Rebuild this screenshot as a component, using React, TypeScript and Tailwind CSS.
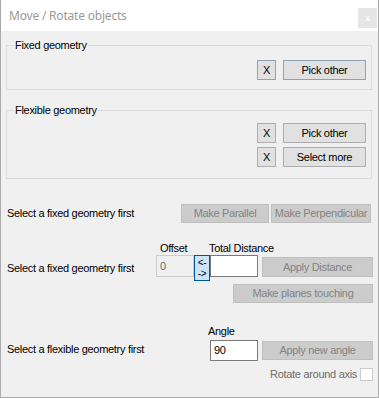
import React from 'react';

type BtnProps = {
  w: string;
  h?: string;
  disabled?: boolean;
  focus?: boolean;
  className?: string;
  children: React.ReactNode;
};

const Btn: React.FC<BtnProps> = ({ w, h = 'h-[20px]', disabled, focus, className = '', children }) => {
  const tone = disabled
    ? 'bg-[#cccccc] border-[#bfbfbf] text-[#838383]'
    : focus
      ? 'bg-[#e1e1e1] border-[#8ba2b8] text-black'
      : 'bg-[#e1e1e1] border-[#adadad] text-black';
  return (
    <div className={`${w} ${h} ${tone} ${className} border flex items-center justify-center shrink-0 whitespace-nowrap`}>
      {children}
    </div>
  );
};

const GroupBox: React.FC<{ title: string; className: string; children: React.ReactNode }> = ({ title, className, children }) => (
  <div className={`relative border border-[#dcdcdc] ${className}`}>
    {/* label sits over the top border, like a legend */}
    <span className="absolute -top-[7px] left-[7px] bg-[#f0f0f0] px-[1px]">{title}</span>
    {children}
  </div>
);

export default function App() {
  return (
    <div className="w-[379px] h-[398px] border-x border-b border-[#aaaaaa] bg-[#f0f0f0] flex flex-col text-[11px] leading-[13px] tracking-[-0.3px] text-black font-['Liberation_Sans',Arial,sans-serif]">
      {/* Title bar */}
      <div className="h-[31px] bg-white flex items-start justify-between pl-[8px] pr-[1px] shrink-0">
        <span className="mt-[8px] text-[12px] leading-[16px] tracking-[-0.2px] text-[#9a9a9a] font-['Noto_Sans',sans-serif]">
          Move / Rotate objects
        </span>
        <div className="mt-[8px] w-[19px] h-[20px] bg-[#e5e5e5] flex items-center justify-center text-[9px] leading-none text-[#fafafa] font-bold">
          x
        </div>
      </div>

      {/* Body */}
      <div className="flex-1 pl-[5px] pr-[6px] flex flex-col">
        <GroupBox title="Fixed geometry" className="mt-[14px] h-[45px]">
          <div className="flex justify-end gap-[7px] pt-[14px] pr-[5px]">
            <Btn w="w-[19px]" focus>X</Btn>
            <Btn w="w-[83px]" focus>Pick other</Btn>
          </div>
        </GroupBox>

        <GroupBox title="Flexible geometry" className="mt-[20px] h-[69px]">
          <div className="flex flex-col items-end gap-[4px] pt-[12px] pr-[5px]">
            <div className="flex gap-[7px]">
              <Btn w="w-[19px]">X</Btn>
              <Btn w="w-[83px]">Pick other</Btn>
            </div>
            <div className="flex gap-[7px]">
              <Btn w="w-[19px]">X</Btn>
              <Btn w="w-[83px]">Select more</Btn>
            </div>
          </div>
        </GroupBox>

        {/* Parallel / perpendicular */}
        <div className="mt-[25px] flex items-center h-[19px]">
          <span className="w-[175px] pl-[1px] shrink-0">Select a fixed geometry first</span>
          <Btn w="w-[88px]" h="h-[19px]" disabled>Make Parallel</Btn>
          <Btn w="w-[100px]" h="h-[19px]" disabled className="ml-[2px]">Make Perpendicular</Btn>
        </div>

        {/* Distance */}
        <div className="mt-[19px] flex">
          <span className="w-[150px] pl-[1px] mt-[20px] shrink-0">Select a fixed geometry first</span>
          <div className="flex flex-col">
            <div className="flex h-[13px]">
              <span className="ml-[4px] w-[49px]">Offset</span>
              <span>Total Distance</span>
            </div>
            <div className="flex items-start">
              <div className="w-[38px] h-[22px] border border-[#cccccc] bg-[#f0f0f0] text-[#6d6d6d] pl-[3px] flex items-center">0</div>
              <div className="w-[16px] h-[26px] border border-[#005499] bg-[#cce4f7] flex flex-col items-center justify-center text-[10px] leading-[11px]">
                <span>&lt;-</span>
                <span>-&gt;</span>
              </div>
              <div className="w-[48px] h-[22px] border border-[#7a7a7a] bg-white" />
              <Btn w="w-[111px]" disabled className="ml-[4px] mt-[2px]">Apply Distance</Btn>
            </div>
            <Btn w="w-[140px]" h="h-[19px]" disabled className="ml-[77px] mt-[3px]">Make planes touching</Btn>
          </div>
        </div>

        {/* Angle */}
        <div className="mt-[22px] flex">
          <span className="w-[204px] pl-[1px] mt-[18px] shrink-0">Select a flexible geometry first</span>
          <div className="flex flex-col">
            <span className="-ml-[2px] h-[13px]">Angle</span>
            <div className="flex items-start mt-[2px]">
              <div className="w-[48px] h-[21px] border border-[#7a7a7a] bg-white pl-[3px] flex items-center">90</div>
              <Btn w="w-[111px]" h="h-[19px]" disabled className="ml-[4px] mt-[1px]">Apply new angle</Btn>
            </div>
          </div>
        </div>

        <div className="mt-[7px] flex justify-end items-center -mr-[1px]">
          <span className="text-[#6d6d6d]">Rotate around axis</span>
          <div className="ml-[3px] w-[13px] h-[13px] border border-[#cccccc] bg-white" />
        </div>
      </div>
    </div>
  );
}
